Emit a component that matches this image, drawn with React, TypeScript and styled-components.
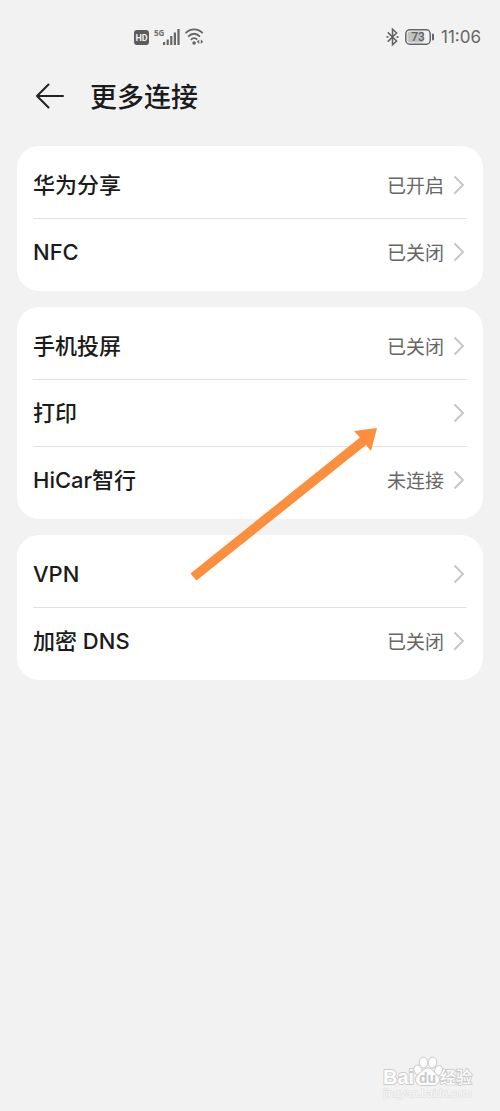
import React from "react";
import styled, { createGlobalStyle } from "styled-components";

const GlobalStyle = createGlobalStyle`
  *, *::before, *::after { box-sizing: border-box; }
  body {
    margin: 0;
    background: #f2f2f2;
    font-family: Inter, "Noto Sans CJK SC", sans-serif;
    color: #1b1b1b;
  }
`;

const Page = styled.div`
  display: flex;
  flex-direction: column;
  min-height: 100vh;
  background: #f2f2f2;
`;

const StatusBar = styled.div`
  display: flex;
  align-items: center;
  justify-content: space-between;
  height: 74px;
  padding: 0 19px 0 134px;
  color: #606060;
`;

const StatusGroup = styled.div<{ $gap: number }>`
  display: flex;
  align-items: center;
  gap: ${({ $gap }) => $gap}px;
`;

const Clock = styled.time`
  font-size: 17px;
  line-height: 20px;
  color: #666666;
`;

const Header = styled.header`
  display: flex;
  align-items: center;
  gap: 25px;
  height: 44px;
  padding: 0 34px;
`;

const BackButton = styled.button`
  display: flex;
  padding: 0;
  border: 0;
  background: none;
  color: #222222;
  cursor: pointer;
`;

const Title = styled.h1`
  margin: 0;
  font-family: "Noto Sans CJK SC", sans-serif;
  font-size: 27px;
  line-height: 44px;
  font-weight: 500;
`;

const Groups = styled.main`
  position: relative;
  display: flex;
  flex-direction: column;
  gap: 16px;
  padding: 28px 17px;
`;

const Card = styled.ul`
  margin: 0;
  padding: 6px 16px;
  list-style: none;
  border-radius: 22px;
  background: #ffffff;
`;

const Item = styled.li`
  & + & {
    border-top: 1px solid #e1e1e1;
  }
`;

const Row = styled.button`
  display: flex;
  align-items: center;
  gap: 9px;
  width: 100%;
  height: 66px;
  padding: 0;
  border: 0;
  background: none;
  font: inherit;
  color: inherit;
  text-align: left;
  cursor: pointer;
`;

const Label = styled.span`
  flex: 1;
  font-size: 22px;
  line-height: 32px;
  font-weight: 500;
`;

const Value = styled.span`
  font-family: "Noto Sans CJK SC", sans-serif;
  font-size: 19px;
  line-height: 28px;
  color: #666666;
`;

const Pointer = styled.svg`
  position: absolute;
  top: 308px;
  left: 38%;
  pointer-events: none;
`;

const Watermark = styled.footer`
  display: flex;
  justify-content: flex-end;
  margin-top: auto;
  padding: 0 26px 8px;
`;

const Chevron = () => (
  <svg width="14" height="20" viewBox="0 0 14 20" fill="none" stroke="#c4c4c4" strokeWidth="1.8" aria-hidden="true">
    <path d="M1.5 1.5 10 10l-8.500 8.500" />
  </svg>
);

const HdIcon = () => (
  <svg width="15" height="15" viewBox="0 0 15 15" aria-label="HD">
    <rect width="15" height="15" rx="3" fill="#5c5c5c" />
    <text x="7.500" y="10.800" textAnchor="middle" fontSize="9" fontWeight="700" fontFamily="Roboto, sans-serif" fill="#f2f2f2">HD</text>
  </svg>
);

const SignalIcon = () => (
  <svg width="26" height="18" viewBox="0 0 26 18" aria-label="5G">
    <text x="0" y="8" fontSize="8" fontWeight="700" fontFamily="'Open Sans', sans-serif" fill="#707070">5G</text>
    <g fill="#666666">
      <rect x="9" y="14" width="2.200" height="3" />
      <rect x="12.600" y="11.500" width="2.200" height="5.500" />
      <rect x="16.200" y="8" width="2.200" height="9" />
      <rect x="19.800" y="4.500" width="2.200" height="12.500" />
      <rect x="23.400" y="1" width="2.200" height="16" />
    </g>
  </svg>
);

const WifiIcon = () => (
  <svg width="19" height="18" viewBox="0 0 19 18" fill="none" stroke="#666666" aria-label="Wi-Fi">
    <path d="M0.500 5.200C5.200 0 13 0 17.700 5.200" strokeWidth="1.800" />
    <path d="M3.200 8.600C6.800 4.800 11.400 4.800 15 8.600" strokeWidth="1.800" />
    <path d="M5.900 11.900C7.800 9.700 10.400 9.700 12.200 11.600" strokeWidth="1.800" />
    <circle cx="9.100" cy="15" r="1.800" fill="#666666" stroke="none" />
    <path d="M14.200 11.600 11.800 13.800l2.400 2.200zM15.800 11.600l2.400 2.200-2.400 2.200z" fill="#666666" stroke="none" />
  </svg>
);

const BluetoothIcon = () => (
  <svg width="13" height="20" viewBox="0 0 13 20" fill="none" stroke="#606060" strokeWidth="1.500" aria-label="Bluetooth">
    <path d="M1.800 5.400 10.600 14 6.500 17.800V2.200L10.600 6 1.800 14.600" />
    <circle cx="1.500" cy="10" r="1.100" fill="#606060" stroke="none" />
    <circle cx="11.500" cy="10" r="1.100" fill="#606060" stroke="none" />
  </svg>
);

const BatteryIcon = () => (
  <svg width="30" height="16" viewBox="0 0 30 16" aria-label="73%">
    <rect x="2.500" y="2.500" width="16" height="11" rx="2" fill="#c2c2c2" />
    <rect x="0.800" y="0.800" width="24.400" height="14.400" rx="4" fill="none" stroke="#666666" strokeWidth="1.500" />
    <rect x="27" y="4.500" width="2" height="7" rx="1" fill="#666666" />
    <text x="13" y="12.200" textAnchor="middle" fontSize="12" fontWeight="500" fontFamily="Roboto, sans-serif" fill="#606060">73</text>
  </svg>
);

const BackIcon = () => (
  <svg width="31" height="28" viewBox="0 0 31 28" fill="none" stroke="currentColor" strokeWidth="2" strokeLinecap="round" strokeLinejoin="round">
    <path d="M14.500 2.500 3 14l11.500 11.500M3 14h26" />
  </svg>
);

const BaiduMark = () => (
  <svg width="92" height="48" viewBox="0 0 92 48" aria-label="Baidu 经验">
    <g fill="#fcfcfc" stroke="#cccccc" strokeWidth="1.800" paintOrder="stroke">
      <text x="1" y="29" fontSize="20" fontWeight="700" fontFamily="'Liberation Sans', sans-serif">Bai</text>
      <ellipse cx="36" cy="15" rx="3.600" ry="4.600" transform="rotate(-20 36 15)" />
      <ellipse cx="41.500" cy="7.500" rx="3.700" ry="5" />
      <ellipse cx="50.500" cy="7.500" rx="3.700" ry="5" transform="rotate(8 50.500 7.500)" />
      <ellipse cx="56.500" cy="15.500" rx="3.400" ry="4.600" transform="rotate(20 56.500 15.500)" />
      <path d="M46 13.500c3.500 0 4.500 2.500 6.500 4.500s4.500 3.500 4.500 6.500c0 3.500-3 5.500-6 5.500H40c-3.500 0-6-2-6-5.500 0-3 2.500-4.500 4.500-6.500s4-4.500 7.500-4.500z" />
      <text x="58" y="28" fontSize="16" fontWeight="500" fontFamily="'Noto Sans CJK SC', sans-serif">经验</text>
    </g>
    <text x="45.500" y="27.500" textAnchor="middle" fontSize="14" fontWeight="700" fontFamily="'Liberation Sans', sans-serif" fill="#c8c8c8">du</text>
    <text x="1" y="42" fontSize="11" fontFamily="'Liberation Sans', sans-serif" fill="#fafafa" stroke="#dddddd" strokeWidth="1" paintOrder="stroke">jingyan.baidu.com</text>
  </svg>
);

type Entry = { label: string; value?: string };

const groups: Entry[][] = [
  [
    { label: "华为分享", value: "已开启" },
    { label: "NFC", value: "已关闭" },
  ],
  [
    { label: "手机投屏", value: "已关闭" },
    { label: "打印" },
    { label: "HiCar智行", value: "未连接" },
  ],
  [{ label: "VPN" }, { label: "加密 DNS", value: "已关闭" }],
];

export default function App() {
  return (
    <Page>
      <GlobalStyle />
      <StatusBar>
        <StatusGroup $gap={5}>
          <HdIcon />
          <SignalIcon />
          <WifiIcon />
        </StatusGroup>
        <StatusGroup $gap={6}>
          <BluetoothIcon />
          <BatteryIcon />
          <Clock>11:06</Clock>
        </StatusGroup>
      </StatusBar>
      <Header>
        <BackButton type="button" aria-label="返回">
          <BackIcon />
        </BackButton>
        <Title>更多连接</Title>
      </Header>
      <Groups>
        {groups.map((entries) => (
          <Card key={entries[0].label}>
            {entries.map(({ label, value }) => (
              <Item key={label}>
                <Row type="button">
                  <Label>{label}</Label>
                  {value && <Value>{value}</Value>}
                  <Chevron />
                </Row>
              </Item>
            ))}
          </Card>
        ))}
        <Pointer width="190" height="156" viewBox="0 0 190 156" aria-hidden="true">
          <path d="M187 2 164 5l6 6.500L0.500 147.500l6 7L176 19l5 6z" fill="#fb8f3d" />
        </Pointer>
      </Groups>
      <Watermark>
        <BaiduMark />
      </Watermark>
    </Page>
  );
}
